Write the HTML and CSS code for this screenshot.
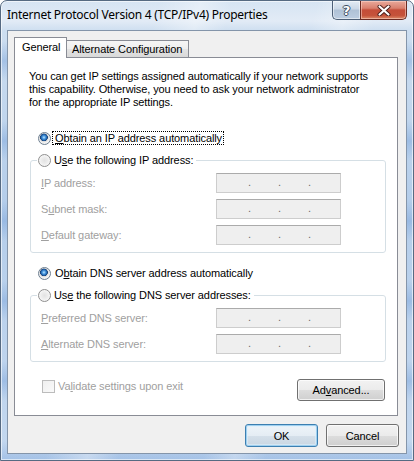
FILE: index.html
```html
<!DOCTYPE html>
<html>
<head>
<meta charset="utf-8">
<link rel="stylesheet" href="styles.css">
</head>
<body>
<div class="window">
  <div class="titlebar">
    <span class="title">Internet Protocol Version 4 (TCP/IPv4) Properties</span>
    <div class="caption-btns">
      <div class="cbtn help"><span>?</span></div>
      <div class="cbtn close">
        <svg width="14" height="11" viewBox="0 0 14 11">
          <path d="M2.5 1.5 L11.5 9.5 M11.5 1.5 L2.5 9.5" stroke="#4a1e1a" stroke-width="4" stroke-linecap="round" fill="none"/>
          <path d="M2.5 1.5 L11.5 9.5 M11.5 1.5 L2.5 9.5" stroke="#ffffff" stroke-width="2.2" stroke-linecap="round" fill="none"/>
        </svg>
      </div>
    </div>
  </div>
  <div class="client">
    <div class="tabs">
      <div class="tab active">General</div>
      <div class="tab">Alternate Configuration</div>
    </div>
    <div class="panel">
      <p class="intro">You can get IP settings assigned automatically if your network supports<br>this capability. Otherwise, you need to ask your network administrator<br>for the appropriate IP settings.</p>

      <div class="radio-row first">
        <span class="radio checked"></span><span class="focus"><u>O</u>btain an IP address automatically</span>
      </div>

      <fieldset class="group">
        <legend><span class="radio"></span><span class="legend-text">U<u>s</u>e the following IP address:</span></legend>
        <div class="field-row"><span class="flabel"><u>I</u>P address:</span><span class="ipbox"><i>.</i><i>.</i><i>.</i></span></div>
        <div class="field-row"><span class="flabel">S<u>u</u>bnet mask:</span><span class="ipbox"><i>.</i><i>.</i><i>.</i></span></div>
        <div class="field-row"><span class="flabel"><u>D</u>efault gateway:</span><span class="ipbox"><i>.</i><i>.</i><i>.</i></span></div>
      </fieldset>

      <div class="radio-row second">
        <span class="radio checked"></span><span class="plain">O<u>b</u>tain DNS server address automatically</span>
      </div>

      <fieldset class="group dns">
        <legend><span class="radio"></span><span class="legend-text">Us<u>e</u> the following DNS server addresses:</span></legend>
        <div class="field-row"><span class="flabel"><u>P</u>referred DNS server:</span><span class="ipbox"><i>.</i><i>.</i><i>.</i></span></div>
        <div class="field-row"><span class="flabel"><u>A</u>lternate DNS server:</span><span class="ipbox"><i>.</i><i>.</i><i>.</i></span></div>
      </fieldset>

      <div class="bottom-row">
        <div class="check-row"><span class="checkbox"></span><span>Va<u>l</u>idate settings upon exit</span></div>
        <div class="btn advanced">Ad<u>v</u>anced...</div>
      </div>
    </div>
    <div class="dialog-btns">
      <div class="btn default">OK</div>
      <div class="btn">Cancel</div>
    </div>
  </div>
</div>
</body>
</html>
```

FILE: styles.css
```css
* { box-sizing: border-box; }
html, body { margin: 0; padding: 0; background: #ffffff; }
body {
  font-family: "Liberation Sans", Arial, sans-serif;
  font-size: 11px;
  letter-spacing: -0.1px;
  color: #000;
}
u { text-decoration: underline; text-underline-offset: 1px; }

.window {
  width: 414px;
  height: 461px;
  border: 1px solid #566a82;
  border-radius: 7px 7px 0 0;
  display: flex;
  flex-direction: column;
  overflow: hidden;
  background:
    linear-gradient(104deg, rgba(255,255,255,0) 0 30%, rgba(255,255,255,.35) 38%, rgba(255,255,255,0) 44%, rgba(255,255,255,0) 60%, rgba(255,255,255,.3) 66%, rgba(255,255,255,0) 72%),
    repeating-linear-gradient(180deg, rgba(110,155,215,0) 0 40px, rgba(110,155,215,.4) 60px, rgba(110,155,215,0) 80px),
    linear-gradient(180deg, #d6e4f3 0, #e2ebf6 20px, #cddef0 30px, #b4cdea 200px, #c4d8ef 461px);
  box-shadow: inset 0 0 0 1px rgba(255,255,255,.6);
}

.titlebar {
  height: 29px;
  flex: none;
  display: flex;
  align-items: flex-start;
  justify-content: space-between;
}
.title {
  font-family: "Noto Sans", "Open Sans", sans-serif;
  font-size: 12px;
  line-height: 16px;
  padding: 6px 0 0 6px;
  color: #000;
  letter-spacing: -0.26px;
}
.caption-btns {
  display: flex;
  margin-right: 6px;
  height: 19px;
}
.cbtn {
  height: 19px;
  display: flex;
  align-items: center;
  justify-content: center;
  border: 1px solid #4d5f77;
  border-top: none;
}
.help {
  width: 28px;
  border-radius: 0 0 0 5px;
  border-right: none;
  background: linear-gradient(180deg, #e3ebf4 0, #cad7e6 45%, #afc1d6 50%, #bccde1 100%);
  box-shadow: inset 0 0 0 1px rgba(255,255,255,.5);
}
.help span {
  font-family: "DejaVu Sans", sans-serif;
  font-weight: bold;
  font-size: 13px;
  line-height: 13px;
  color: #fff;
  text-shadow: 1px 0 0 #3b4b5f, -1px 0 0 #3b4b5f, 0 1px 0 #3b4b5f, 0 -1px 0 #3b4b5f;
}
.close {
  width: 47px;
  border-radius: 0 0 5px 0;
  border-color: #6a2a22;
  background: linear-gradient(180deg, #e9a99b 0, #d9806e 40%, #c44d38 50%, #c5523a 80%, #db8b68 100%);
  box-shadow: inset 0 0 0 1px rgba(255,220,210,.5);
}

.client {
  flex: 1;
  margin: 0 6px 6px 6px;
  border: 1px solid #8495aa;
  background: #f0f0f0;
  display: flex;
  flex-direction: column;
}

.tabs {
  display: flex;
  align-items: flex-end;
  height: 20px;
  margin: 6px 0 0 6px;
}
.tab {
  border: 1px solid #898c95;
  border-bottom: none;
  height: 17px;
  width: 123px;
  margin-left: -1px;
  padding: 2px 0 0 5px;
  line-height: 13px;
  background: linear-gradient(180deg, #f5f5f5 0, #eeeeee 50%, #e3e3e3 51%, #d9d9d9 100%);
}
.tab.active {
  position: relative;
  z-index: 1;
  margin-left: 0;
  width: 53px;
  height: 21px;
  margin-bottom: -1px;
  padding: 3px 0 0 7px;
  background: #ffffff;
}

.panel {
  margin-left: 6px;
  width: 384px;
  height: 359px;
  border: 1px solid #898c95;
  background: #ffffff;
  display: flex;
  flex-direction: column;
  padding-top: 12px;
}

.intro {
  margin: 0;
  padding-left: 14px;
  line-height: 13px;
}

.radio-row {
  display: flex;
  align-items: center;
  height: 14px;
  padding-left: 23px;
  line-height: 13px;
}
.radio-row.first { margin-top: 22px; }
.radio-row.second { margin-top: 13px; }
.radio-row .radio { margin-right: 1px; }
.focus {
  border: 1px dotted #000;
  padding: 0 1px 0 2px;
  line-height: 12px;
}
.plain { padding-left: 3px; }

.radio {
  display: inline-block;
  flex: none;
  width: 13px;
  height: 13px;
  border-radius: 50%;
  border: 1px solid #8f8f8f;
  background: radial-gradient(circle at 50% 50%, #e2e2e2 0, #ececec 3px, #f6f6f6 5.5px);
}
.radio.checked {
  border-color: #6e7f91;
  background: radial-gradient(circle at 45% 40%, #bfe6ff 0, #4a9ae0 1.6px, #1d5ea8 3px, #173f72 3.6px, #dcdcdc 4.1px, #f3f3f3 5.5px);
}

.group {
  margin: 8px 11px 0 15px;
  border: 1px solid #d5dfe5;
  border-radius: 3px;
  padding: 5px 0 7px 10px;
  min-width: 0;
}
.group legend {
  display: flex;
  align-items: center;
  height: 15px;
  line-height: 15px;
  padding: 0 3px 0 1px;
  margin-left: -4px;
}
.legend-text { padding-left: 3px; }

.field-row {
  display: flex;
  align-items: center;
  height: 20px;
}
.field-row + .field-row { margin-top: 6px; }
.flabel {
  width: 175px;
  color: #a0a0a0;
}
.ipbox {
  width: 125px;
  height: 20px;
  border: 1px solid #cdcdcd;
  border-top-color: #ababab;
  background: #efefef;
  display: grid;
  grid-template-columns: 34px 30px 30px 1fr;
}
.ipbox i {
  font-style: normal;
  color: #6d6d6d;
  line-height: 17px;
  text-align: right;
  font-size: 11px;
}

.bottom-row {
  margin-top: 17px;
  display: flex;
  align-items: flex-start;
}
.check-row {
  display: flex;
  align-items: center;
  height: 14px;
  padding-left: 27px;
  color: #a0a0a0;
}
.checkbox {
  width: 13px;
  height: 13px;
  border: 1px solid #bcbcbc;
  background: linear-gradient(135deg, #efefef, #fafafa);
  margin-right: 3px;
}

.btn {
  height: 23px;
  width: 73px;
  border: 1px solid #707070;
  border-radius: 3px;
  display: flex;
  align-items: center;
  justify-content: center;
  background: linear-gradient(180deg, #f2f2f2 0, #ebebeb 50%, #dddddd 51%, #cfcfcf 100%);
  box-shadow: inset 0 0 0 1px rgba(255,255,255,.7);
}
.btn.advanced {
  margin-left: auto;
  margin-right: 12px;
  width: 88px;
  height: 22px;
}
.dialog-btns {
  display: flex;
  justify-content: flex-end;
  gap: 8px;
  margin-top: 8px;
  padding-right: 7px;
}
.btn.default {
  border-color: #3c7fb1;
  background: linear-gradient(180deg, #eef4f9 0, #e5edf4 50%, #d5e0ea 51%, #c9d6e2 100%);
  box-shadow: inset 0 0 0 1px #9fd0f0, inset 0 0 0 2px rgba(220,240,252,.6);
}
```
